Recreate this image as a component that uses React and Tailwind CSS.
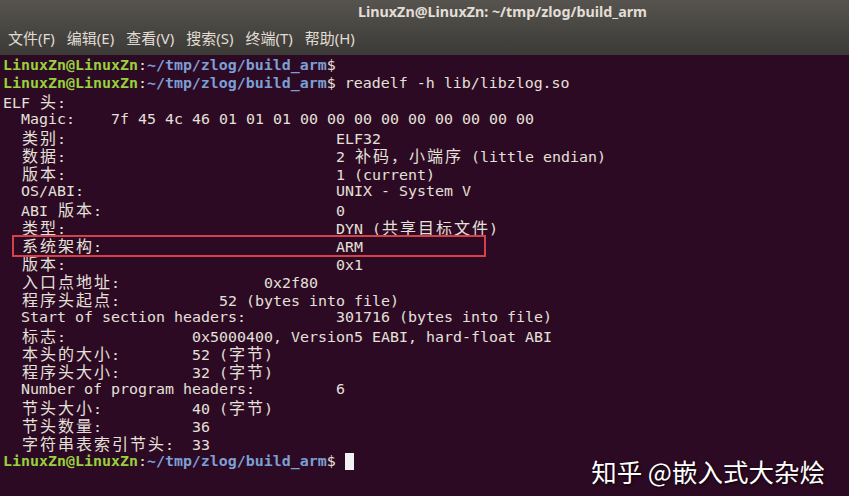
import React from 'react';

const CJK = /[\u3000-\u303f\u4e00-\u9fff\uff00-\uffef]/;

const width = (s) => [...s].reduce((n, c) => n + (CJK.test(c) ? 2 : 1), 0);
const pad = (label, col) => label + ' '.repeat(Math.max(1, col - width(label)));

// terminal cells: CJK glyphs take two columns
const Mono = ({ text }) => (
  <>
    {[...text].map((c, i) =>
      CJK.test(c) ? (
        <span
          key={i}
          className="inline-block w-[18px] text-center text-[16px] font-['Noto_Sans_CJK_SC',sans-serif]"
        >
          {c}
        </span>
      ) : (
        <span key={i}>{c}</span>
      )
    )}
  </>
);

const Prompt = () => (
  <>
    <span className="font-bold text-[#97d23c]">LinuxZn@LinuxZn</span>
    <span className="text-[#e4e0da]">:</span>
    <span className="font-bold text-[#7c9fd4]">~/tmp/zlog/build_arm</span>
    <span className="text-[#e4e0da]">$</span>
  </>
);

const rows = [
  'ELF 头:',
  '  Magic:    7f 45 4c 46 01 01 01 00 00 00 00 00 00 00 00 00',
  pad('  类别:', 37) + 'ELF32',
  pad('  数据:', 37) + '2 补码，小端序 (little endian)',
  pad('  版本:', 37) + '1 (current)',
  pad('  OS/ABI:', 37) + 'UNIX - System V',
  pad('  ABI 版本:', 37) + '0',
  pad('  类型:', 37) + 'DYN (共享目标文件)',
  pad('  系统架构:', 37) + 'ARM',
  pad('  版本:', 37) + '0x1',
  pad('  入口点地址:', 29) + '0x2f80',
  pad('  程序头起点:', 24) + '52 (bytes into file)',
  pad('  Start of section headers:', 37) + '301716 (bytes into file)',
  pad('  标志:', 21) + '0x5000400, Version5 EABI, hard-float ABI',
  pad('  本头的大小:', 21) + '52 (字节)',
  pad('  程序头大小:', 21) + '32 (字节)',
  pad('  Number of program headers:', 37) + '6',
  pad('  节头大小:', 21) + '40 (字节)',
  pad('  节头数量:', 21) + '36',
  pad('  字符串表索引节头:', 21) + '33',
];

const menus = ['文件(F)', '编辑(E)', '查看(V)', '搜索(S)', '终端(T)', '帮助(H)'];

export default function App() {
  return (
    <div className="w-[849px] h-[496px] overflow-hidden flex flex-col bg-[#2d0a23] font-['Noto_Sans','Noto_Sans_CJK_SC',sans-serif]">
      <div className="h-[55px] shrink-0 flex flex-col bg-gradient-to-b from-[#57544f] to-[#3b3a36]">
        <div className="h-[23px] flex items-center pl-[358px] text-[14.3px] font-bold text-[#e2ded6]">
          LinuxZn@LinuxZn: ~/tmp/zlog/build_arm
        </div>
        <div className="flex-1 flex items-center gap-[12px] pl-[8px] pb-[1px] text-[15px] text-[#e0dcd4]">
          {menus.map((m) => (
            <span key={m}>{m}</span>
          ))}
        </div>
      </div>

      <div className="relative flex-1 pt-[1px] pl-[3px] text-[14.94px] leading-[18px] text-[#e4e0da] font-['DejaVu_Sans_Mono',monospace] whitespace-pre">
        <div className="h-[18px]">
          <Prompt />
        </div>
        <div className="h-[18px]">
          <Prompt />
          <span> readelf -h lib/libzlog.so</span>
        </div>
        {rows.map((r, i) => (
          <div key={i} className="h-[18px]">
            <Mono text={r} />
          </div>
        ))}
        <div className="h-[18px] flex items-center">
          <Prompt />
          <span> </span>
          <span className="inline-block w-[9px] h-[17px] bg-[#f2f2f2]" />
        </div>

        <div className="absolute left-[12px] top-[180px] w-[474px] h-[22px] border-2 border-[#d5404b]" />

        <div className="absolute right-[24px] bottom-[16px] text-[25.5px] text-white font-['Noto_Sans_CJK_SC',sans-serif] [text-shadow:1px_1px_3px_rgba(0,0,0,0.9)]">
          知乎 @嵌入式大杂烩
        </div>
      </div>
    </div>
  );
}
